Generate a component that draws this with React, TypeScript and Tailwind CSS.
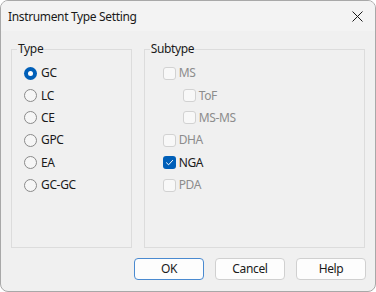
import React, { useState } from 'react';

const FONT = { fontFamily: '"Noto Sans", "Open Sans", Arial, sans-serif' };

const TYPES = ['GC', 'LC', 'CE', 'GPC', 'EA', 'GC-GC'];

interface SubItem {
  label: string;
  indent?: boolean;
  checked?: boolean;
  disabled?: boolean;
}

const SUBTYPES: SubItem[] = [
  { label: 'MS', disabled: true },
  { label: 'ToF', indent: true, disabled: true },
  { label: 'MS-MS', indent: true, disabled: true },
  { label: 'DHA', disabled: true },
  { label: 'NGA', checked: true },
  { label: 'PDA', disabled: true },
];

function Radio({ checked }: { checked: boolean }) {
  if (checked) {
    return (
      <span className="w-[13px] h-[13px] rounded-full bg-[#005fb8] flex items-center justify-center shrink-0">
        <span className="w-[5px] h-[5px] rounded-full bg-white" />
      </span>
    );
  }
  return <span className="w-[13px] h-[13px] rounded-full border border-[#8a8a8a] bg-[#f6f6f6] shrink-0" />;
}

function Checkbox({ checked, disabled }: { checked?: boolean; disabled?: boolean }) {
  if (checked) {
    return (
      <span className="w-[13px] h-[13px] rounded-[3px] bg-[#005fb8] flex items-center justify-center shrink-0">
        <svg width="9" height="9" viewBox="0 0 9 9" fill="none">
          <path d="M1.5 4.8 L3.6 6.8 L7.6 2.4" stroke="white" strokeWidth="1" strokeLinecap="round" strokeLinejoin="round" />
        </svg>
      </span>
    );
  }
  return (
    <span
      className={`w-[13px] h-[13px] rounded-[3px] border shrink-0 ${disabled ? 'border-[#d2d2d2] bg-[#f8f8f8]' : 'border-[#8a8a8a] bg-white'}`}
    />
  );
}

export default function App() {
  const [type, setType] = useState('GC');

  return (
    <div className="w-[376px] h-[292px] bg-white text-[12px] tracking-[-0.35px] text-[#1a1a1a]" style={FONT}>
      <div className="w-full h-full flex flex-col border border-[#a8a8a8] rounded-[8px] overflow-hidden bg-[#f0f0f0]">
        {/* title bar */}
        <div className="h-[30px] flex items-center justify-between pl-[7px] pr-[12px] pt-[1px] bg-[#f3f3f3]">
          <span className="leading-none">Instrument Type Setting</span>
          <svg width="11" height="11" viewBox="0 0 11 11">
            <path d="M0.5 0.5 L10.5 10.5 M10.5 0.5 L0.5 10.5" stroke="#1a1a1a" strokeWidth="1" />
          </svg>
        </div>

        <div className="flex-1 flex flex-col pt-[10px] px-[10px]">
          <div className="flex gap-[12px]">
            <fieldset className="w-[121px] h-[207px] border border-[#dcdcdc]">
              <legend className="ml-[5px] px-[1px] leading-[16px]">Type</legend>
              <div className="flex flex-col pl-[12px] pt-[5px]">
                {TYPES.map((t) => (
                  <div key={t} className="h-[22.4px] flex items-center gap-[4px]" onClick={() => setType(t)}>
                    <Radio checked={type === t} />
                    <span>{t}</span>
                  </div>
                ))}
              </div>
            </fieldset>

            <fieldset className="w-[222px] h-[207px] border border-[#dcdcdc]">
              <legend className="ml-[5px] px-[1px] leading-[16px]">Subtype</legend>
              <div className="flex flex-col pl-[18px] pt-[5px]">
                {SUBTYPES.map((s) => (
                  <div key={s.label} className={`h-[22.4px] flex items-center gap-[3px] ${s.indent ? 'ml-[20px]' : ''}`}>
                    <Checkbox checked={s.checked} disabled={s.disabled} />
                    <span className={s.disabled ? 'text-[#8c8c8c]' : ''}>{s.label}</span>
                  </div>
                ))}
              </div>
            </fieldset>
          </div>

          <div className="flex justify-end gap-[11px] mt-[10px] -mr-[1px]">
            <button className="w-[70px] h-[22px] rounded-[4px] border border-[#4a8ad0] bg-[#fdfdfd]">OK</button>
            <button className="w-[70px] h-[22px] rounded-[4px] border border-[#d0d0d0] bg-[#fdfdfd]">Cancel</button>
            <button className="w-[70px] h-[22px] rounded-[4px] border border-[#d0d0d0] bg-[#fdfdfd]">Help</button>
          </div>
        </div>
      </div>
    </div>
  );
}
